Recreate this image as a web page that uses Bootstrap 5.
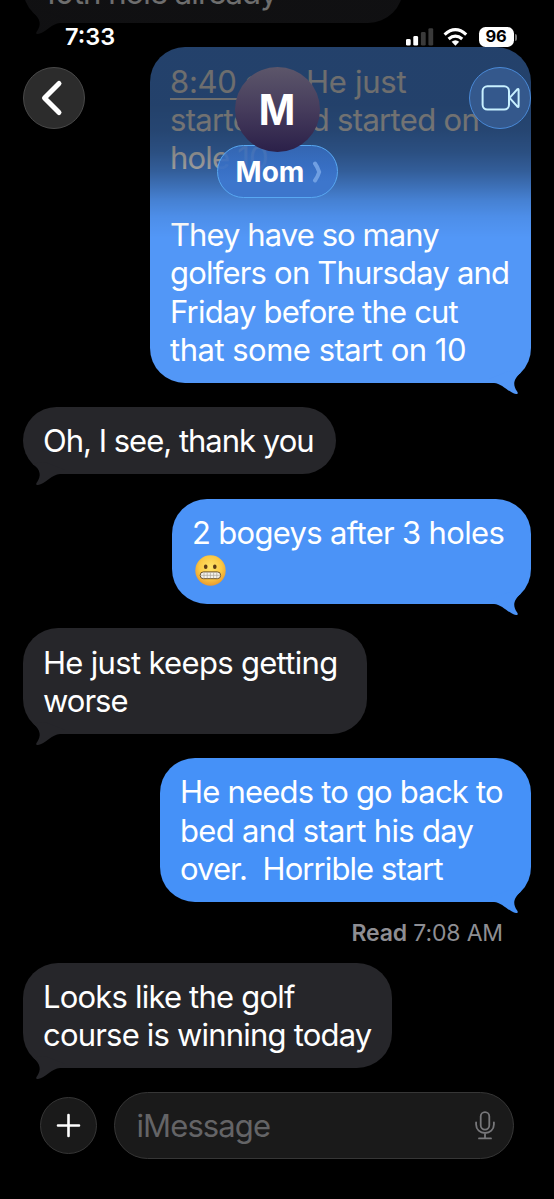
<!DOCTYPE html>
<html lang="en" data-bs-theme="dark">
<head>
<meta charset="utf-8">
<meta name="viewport" content="width=device-width, initial-scale=1">
<title>Mom</title>
<link href="https://cdn.jsdelivr.net/npm/bootstrap@5.3.0/dist/css/bootstrap.min.css" rel="stylesheet">
<style>
  body { background: #000; font-family: Inter, "Liberation Sans", sans-serif; color: #fff; }
  .phone { width: 554px; height: 1199px; background: #000; }
  .chat { padding: 0 23px; gap: 24.4px; margin-top: -82.4px; }
  .bubble { padding: 15.2px 20px 13.5px; border-radius: 35px; font-size: 31px; line-height: 38.35px; letter-spacing: -.8px; white-space: pre; }
  .bubble.earlier { padding: 17.7px 20px 11px; }
  .bubble .line { display: block; height: 38.35px; }
  .bubble .loose { letter-spacing: -.5px; }
  .bubble .looser { letter-spacing: -.28px; }
  .bubble .snug { letter-spacing: -.68px; }
  .bubble .tight { letter-spacing: -.92px; }
  .bubble .tighter { letter-spacing: -1px; }
  .bubble u { text-decoration-thickness: 2px; text-underline-offset: 5px; }
  .from-me { background: var(--tone); color: #fff; align-self: flex-end; }
  .from-mom { --tone: #26262a; background: var(--tone); align-self: flex-start; }
  .tail { position: absolute; width: 42px; height: 24px; bottom: -12px; fill: var(--tone); }
  .from-me .tail { right: 0; }
  .from-mom .tail { left: 0; transform: scaleX(-1); }
  .receipt { font-size: 23px; line-height: 24px; color: #8e8e93; margin: -5px 28px -5px 0; letter-spacing: -.15px; height: 22px; }
  .shade { height: 240px; background: linear-gradient(rgba(0,0,0,.57) 105px, rgba(0,0,0,.54) 130px, rgba(0,0,0,.48) 152px, rgba(0,0,0,.38) 171px, rgba(0,0,0,.27) 185px, rgba(0,0,0,.15) 200px, rgba(0,0,0,.06) 217px, transparent 238px); }
  .status { padding: 27px 37px 0 65px; height: 67px; }
  .clock { font-size: 23.5px; line-height: 20px; font-weight: 600; letter-spacing: 0; }
  .battery { width: 35px; height: 19.5px; border-radius: 6.5px; background: #fff; color: #000; font-size: 16.5px; line-height: 19.5px; font-weight: 700; letter-spacing: -.3px; }
  .nub { width: 2.5px; height: 7px; margin-left: 1px; border-radius: 0 3px 3px 0; background: #777; }
  .round { width: 62px; height: 62px; border-radius: 50%; background: #2c2c2c; border: 1px solid #494949; }
  .round.video { background: #34588c; border-color: #4a8ad8; }
  .bar { padding: 0 23px; }
  .avatar { width: 85px; height: 85px; border-radius: 50%; background: linear-gradient(#5c566a, #463c5c 50%, #2b2049); font-size: 43px; font-weight: 700; z-index: 1; }
  .avatar span { transform: scaleX(.91); }
  .name { width: 121px; height: 53px; margin-top: -7px; border-radius: 27px; border: 1.5px solid #58a8f2; background: linear-gradient(rgba(54,108,190,.8), rgba(56,112,198,.93) 40%, #3d76cc 70%); font-size: 28px; font-weight: 700; line-height: 30px; }
  .composer { left: 40px; right: 40px; top: 1091.5px; gap: 17px; }
  .plus { width: 57px; height: 57px; border-radius: 50%; background: #1a1a1a; border: 1px solid #363636; }
  .field { height: 67.5px; border-radius: 34px; background: #1a1a1a; border: 1px solid #363636; padding: 1px 18px 0 21.5px; color: #646466; font-size: 31px; letter-spacing: -.9px; }
</style>
</head>
<body>
<svg width="0" height="0" class="position-absolute">
  <defs>
    <symbol id="tail" viewBox="0 0 42 24"><path d="M0 8 L0 12 H5 C13 12.3 20 22 27 23 C29.4 23.2 29 21.5 27.8 20 C23.8 14 24 8.5 32 1.5 L20 0Z"/></symbol>
    <radialGradient id="face" cx=".5" cy=".4" r=".62"><stop offset="0" stop-color="#ffe46a"/><stop offset=".6" stop-color="#fbc944"/><stop offset="1" stop-color="#e8962c"/></radialGradient>
  </defs>
</svg>
<main class="phone position-relative overflow-hidden">
  <section class="chat d-flex flex-column">
    <div class="bubble earlier from-mom position-relative" style="width:380px"><span class="line"></span><span class="line tight">10th hole already</span><svg class="tail"><use href="#tail"/></svg></div>
    <div class="bubble from-me position-relative" style="--tone:#5297f7;width:381px"><span class="line looser"><u>8:40 am</u>. He just</span><span class="line snug">started and started on</span><span class="line">hole 10</span><span class="line"></span><span class="line tight">They have so many</span><span class="line">golfers on Thursday and</span><span class="line">Friday before the cut</span><span class="line loose">that some start on 10</span><svg class="tail"><use href="#tail"/></svg></div>
    <div class="bubble from-mom position-relative" style="width:312.5px"><span class="line tighter">Oh, I see, thank you</span><svg class="tail"><use href="#tail"/></svg></div>
    <div class="bubble from-me position-relative" style="--tone:#4b93f7;width:359px"><span class="line snug">2 bogeys after 3 holes</span><span class="line"><svg class="d-block" width="36" height="36" viewBox="0 0 36 36" role="img" aria-label="grimacing face"><circle cx="18.5" cy="18.5" r="15.2" fill="url(#face)"/><ellipse cx="13.7" cy="14.7" rx="1.8" ry="2.3" fill="#5b3a16"/><ellipse cx="22.8" cy="14.7" rx="1.8" ry="2.3" fill="#5b3a16"/><rect x="8.2" y="19.9" width="20.4" height="6.8" rx="3.2" fill="#f4f2ec" stroke="#6b512c" stroke-width="1"/><path d="M9 23.3H28M12 20.3V26.3M15.2 20.3V26.3M18.4 20.3V26.3M21.6 20.3V26.3M24.8 20.3V26.3" stroke="#aaa598" stroke-width=".7"/></svg></span><svg class="tail"><use href="#tail"/></svg></div>
    <div class="bubble from-mom position-relative" style="width:344px"><span class="line snug">He just keeps getting</span><span class="line tighter">worse</span><svg class="tail"><use href="#tail"/></svg></div>
    <div class="bubble from-me position-relative" style="--tone:#4591f8;width:371px"><span class="line">He needs to go back to</span><span class="line snug">bed and start his day</span><span class="line tight">over.  Horrible start</span><svg class="tail"><use href="#tail"/></svg></div>
    <div class="receipt align-self-end"><span class="fw-semibold">Read</span> 7:08 AM</div>
    <div class="bubble from-mom position-relative" style="width:369px"><span class="line">Looks like the golf</span><span class="line">course is winning today</span><svg class="tail"><use href="#tail"/></svg></div>
  </section>

  <div class="shade position-absolute top-0 start-0 w-100"></div>

  <header class="position-absolute top-0 start-0 w-100">
    <div class="status d-flex justify-content-between align-items-start">
      <div class="clock">7:33</div>
      <div class="d-flex">
        <svg width="73" height="20" viewBox="406 27 73 20" fill="#fff"><rect x="405.9" y="39" width="4.8" height="6.6" rx="1.4"/><rect x="413.3" y="36" width="4.8" height="9.6" rx="1.4"/><rect x="420.9" y="32" width="4.8" height="13.6" rx="1.4" fill="#3a3a3a"/><rect x="428.4" y="28.2" width="4.8" height="17.4" rx="1.4" fill="#3a3a3a"/><g fill="none" stroke="#fff" stroke-width="3.2"><path d="M444.6 34.6Q455.4 24.8 466.2 34.6"/><path d="M448.6 39Q455.4 33.2 462.2 39"/></g><path d="M451.6 41.7Q455.4 38.6 459.2 41.7L455.4 45.8Z"/></svg>
        <div class="d-flex align-items-center"><div class="battery text-center">96</div><div class="nub"></div></div>
      </div>
    </div>
    <div class="bar d-flex justify-content-between align-items-start">
      <div class="round d-flex"><svg width="60" height="60" viewBox="0 0 60 60"><path d="M35 15.5 20.5 30 35 44.5" fill="none" stroke="#fff" stroke-width="5" stroke-linecap="round" stroke-linejoin="round"/></svg></div>
      <div class="d-flex flex-column align-items-center">
        <div class="avatar d-flex justify-content-center align-items-center"><span>M</span></div>
        <div class="name d-flex align-items-center justify-content-center"><span class="ms-1">Mom</span><svg class="ms-2" width="10" height="22" viewBox="0 0 10 22"><path d="M3 2.5Q5.6 6 7.2 11Q5.6 16 3 19.5" fill="none" stroke="#709fe2" stroke-width="4" stroke-linecap="round" stroke-linejoin="round"/></svg></div>
      </div>
      <div class="round video d-flex"><svg width="60" height="60" viewBox="0 0 60 60" fill="none" stroke="#c8f0ff" stroke-width="2" stroke-linejoin="round"><rect x="12.6" y="18.2" width="26.4" height="23.4" rx="4.8"/><path d="M39.6 29.9 47 21.6Q48.6 20.1 48.6 22.1V37.9Q48.6 39.9 47 38.2Z"/></svg></div>
    </div>
  </header>

  <footer class="composer position-absolute d-flex align-items-center">
    <div class="plus d-flex flex-shrink-0"><svg width="55" height="55" viewBox="0 0 55 55"><path d="M27.5 17V38M17 27.5H38" stroke="#fff" stroke-width="2.6" stroke-linecap="round"/></svg></div>
    <div class="field d-flex flex-grow-1 align-items-center justify-content-between"><span>iMessage</span><svg width="20" height="29" viewBox="0 0 20 29" fill="none" stroke="#77777a" stroke-width="1.8" stroke-linecap="round"><rect x="5.7" y="1.2" width="8.6" height="17.4" rx="4.3"/><path d="M1.1 11.3V13.5C1.1 18.5 5 22 10 22S18.9 18.5 18.9 13.5V11.3M10 22V27.4M4 27.4H16"/></svg></div>
  </footer>
</main>
<script src="https://cdn.jsdelivr.net/npm/bootstrap@5.3.0/dist/js/bootstrap.bundle.min.js"></script>
</body>
</html>
